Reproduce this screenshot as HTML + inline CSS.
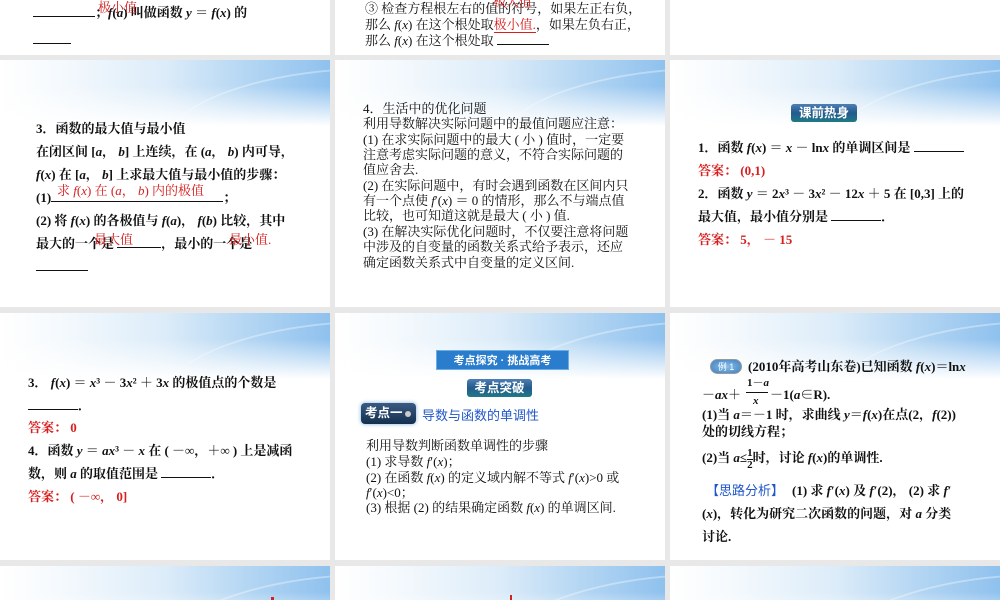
<!DOCTYPE html>
<html><head><meta charset="utf-8">
<style>
*{margin:0;padding:0;box-sizing:border-box}
html,body{width:1000px;height:600px;overflow:hidden;background:#e8e8e8}
body{position:relative;font-family:"Liberation Serif","Noto Serif CJK SC",serif;color:#111}
.s{position:absolute;background:#fff;overflow:hidden}
.hd{position:absolute;left:0;top:0;width:100%;height:66px;
background:linear-gradient(90deg,#ffffff 0%,#f4f9fd 20%,#dcecf9 50%,#b4d6f3 75%,#8fc1ee 100%);}
.hd:after{content:"";position:absolute;left:0;right:0;bottom:0;height:40px;background:linear-gradient(180deg,rgba(255,255,255,0),#fff)}
.sw{position:absolute;left:170px;top:12px;width:280px;height:90px;border-top:2px solid rgba(255,255,255,.35);border-radius:50%;transform:rotate(-8deg)}
.t{position:absolute;font-size:13px;line-height:15px;white-space:nowrap;font-weight:bold}
.r{color:#d62020}
i{font-style:italic}
.u{display:inline-block;border-bottom:1px solid #111;height:11px;vertical-align:baseline}
.b1{position:absolute;color:#fff;font-family:"Liberation Sans","Noto Sans CJK SC",sans-serif;font-weight:bold;text-align:center}
.fr{display:inline-block;vertical-align:middle;text-align:center;font-size:11px;line-height:11px}
.fr span{display:block}
.fr .n{border-bottom:1px solid #111}
</style></head><body>

<!-- Row 1 -->
<div class="s" style="left:0;top:0;width:330px;height:55px">
 <div class="t" style="left:33px;top:5px"><span class="u" style="width:62px"></span>；<i>f</i>(<i>a</i>) 叫做函数 <i>y</i> ＝ <i>f</i>(<i>x</i>) 的</div>
 <div class="t r" style="left:98px;top:0px;font-weight:normal">极小值</div>
 <div class="t" style="left:33px;top:32px"><span class="u" style="width:38px"></span></div>
</div>
<div class="s" style="left:335px;top:0;width:330px;height:55px">
 <div class="t" style="left:30px;top:1px;font-weight:normal">③ 检查方程根左右的值的符号，如果左正右负，</div>
 <div class="t r" style="left:158px;top:-6px;font-weight:normal">极大值</div>
 <div class="t" style="left:30px;top:17px;font-weight:normal">那么 <i>f</i>(<i>x</i>) 在这个根处取<span class="r" style="border-bottom:1px solid #d62020">极小值.</span>，如果左负右正，</div>
 <div class="t" style="left:30px;top:33px;font-weight:normal">那么 <i>f</i>(<i>x</i>) 在这个根处取 <span class="u" style="width:52px"></span></div>
</div>
<div class="s" style="left:670px;top:0;width:330px;height:55px"></div>

<!-- Row 2 -->
<div class="s" style="left:0;top:60px;width:330px;height:247px">
 <div class="hd"><div class="sw"></div></div>
 <div class="t" style="left:36px;top:61px">3．函数的最大值与最小值</div>
 <div class="t" style="left:36px;top:84px">在闭区间 [<i>a</i>， <i>b</i>] 上连续，在 (<i>a</i>， <i>b</i>) 内可导，</div>
 <div class="t" style="left:36px;top:107px"><i>f</i>(<i>x</i>) 在 [<i>a</i>， <i>b</i>] 上求最大值与最小值的步骤：</div>
 <div class="t" style="left:36px;top:130px">(1)<span class="u" style="width:172px"></span>；</div>
 <div class="t r" style="left:57px;top:123px;font-weight:normal">求 <i>f</i>(<i>x</i>) 在 (<i>a</i>， <i>b</i>) 内的极值</div>
 <div class="t" style="left:36px;top:153px">(2) 将 <i>f</i>(<i>x</i>) 的各极值与 <i>f</i>(<i>a</i>)， <i>f</i>(<i>b</i>) 比较，其中</div>
 <div class="t" style="left:36px;top:176px">最大的一个是 <span class="u" style="width:44px"></span>，最小的一个是</div>
 <div class="t r" style="left:94px;top:172px;font-weight:normal">最大值</div>
 <div class="t r" style="left:229px;top:172px;font-weight:normal">最小值.</div>
 <div class="t" style="left:36px;top:199px"><span class="u" style="width:52px"></span></div>
</div>
<div class="s" style="left:335px;top:60px;width:330px;height:247px">
 <div class="hd"><div class="sw"></div></div>
 <div class="t" style="left:28px;top:41px;font-weight:normal">4．生活中的优化问题</div>
 <div class="t" style="left:28px;top:56px;font-weight:normal">利用导数解决实际问题中的最值问题应注意：</div>
 <div class="t" style="left:28px;top:72px;font-weight:normal">(1) 在求实际问题中的最大 ( 小 ) 值时，一定要</div>
 <div class="t" style="left:28px;top:87px;font-weight:normal">注意考虑实际问题的意义，不符合实际问题的</div>
 <div class="t" style="left:28px;top:102px;font-weight:normal">值应舍去.</div>
 <div class="t" style="left:28px;top:118px;font-weight:normal">(2) 在实际问题中，有时会遇到函数在区间内只</div>
 <div class="t" style="left:28px;top:133px;font-weight:normal">有一个点使 <i>f</i>′(<i>x</i>) ＝ 0 的情形，那么不与端点值</div>
 <div class="t" style="left:28px;top:148px;font-weight:normal">比较，也可知道这就是最大 ( 小 ) 值.</div>
 <div class="t" style="left:28px;top:164px;font-weight:normal">(3) 在解决实际优化问题时，不仅要注意将问题</div>
 <div class="t" style="left:28px;top:179px;font-weight:normal">中涉及的自变量的函数关系式给予表示，还应</div>
 <div class="t" style="left:28px;top:195px;font-weight:normal">确定函数关系式中自变量的定义区间.</div>
</div>
<div class="s" style="left:670px;top:60px;width:330px;height:247px">
 <div class="hd"><div class="sw"></div></div>
 <div class="b1" style="left:121px;top:44px;width:66px;height:18px;border-radius:3px;font-size:12.5px;line-height:18px;background:linear-gradient(180deg,#4d7fb5,#245a8c 50%,#1f7a86)">课前热身</div>
 <div class="t" style="left:28px;top:80px">1．函数 <i>f</i>(<i>x</i>) ＝ <i>x</i> － ln<i>x</i> 的单调区间是 <span class="u" style="width:50px"></span></div>
 <div class="t r" style="left:28px;top:103px">答案： (0,1)</div>
 <div class="t" style="left:28px;top:126px">2．函数 <i>y</i> ＝ 2<i>x</i>³ － 3<i>x</i>² － 12<i>x</i> ＋ 5 在 [0,3] 上的</div>
 <div class="t" style="left:28px;top:149px">最大值，最小值分别是 <span class="u" style="width:50px"></span>．</div>
 <div class="t r" style="left:28px;top:172px">答案： 5， － 15</div>
</div>

<!-- Row 3 -->
<div class="s" style="left:0;top:313px;width:330px;height:247px">
 <div class="hd"><div class="sw"></div></div>
 <div class="t" style="left:28px;top:62px">3． <i>f</i>(<i>x</i>) ＝ <i>x</i>³ － 3<i>x</i>² ＋ 3<i>x</i> 的极值点的个数是</div>
 <div class="t" style="left:28px;top:85px"><span class="u" style="width:50px"></span>．</div>
 <div class="t r" style="left:28px;top:107px">答案： 0</div>
 <div class="t" style="left:28px;top:130px">4．函数 <i>y</i> ＝ <i>ax</i>³ － <i>x</i> 在 ( －∞，＋∞ ) 上是减函</div>
 <div class="t" style="left:28px;top:153px">数，则 <i>a</i> 的取值范围是 <span class="u" style="width:50px"></span>．</div>
 <div class="t r" style="left:28px;top:176px">答案： ( －∞， 0]</div>
</div>
<div class="s" style="left:335px;top:313px;width:330px;height:247px">
 <div class="hd"><div class="sw"></div></div>
 <div class="b1" style="left:101px;top:37px;width:133px;height:20px;font-size:11px;line-height:20px;background:#2a7ccc;border:1px solid #6aaee8">考点探究 · 挑战高考</div>
 <div class="b1" style="left:132px;top:66px;width:65px;height:18px;border-radius:3px;font-size:12.5px;line-height:18px;background:linear-gradient(180deg,#4d7fb5,#245a8c 50%,#1f7a86)">考点突破</div>
 <div class="b1" style="left:26px;top:90px;width:55px;height:21px;border-radius:4px;font-size:12.5px;line-height:21px;text-align:left;padding-left:4px;background:linear-gradient(180deg,#3a5a82,#13304f);box-shadow:0 0 4px #7fb0d8">考点一<span style="display:inline-block;width:6px;height:6px;border-radius:50%;background:#ccc;margin-left:2px"></span></div>
 <div class="t" style="left:87px;top:95px;color:#2057c8;font-weight:normal;font-family:'Liberation Sans','Noto Sans CJK SC',sans-serif">导数与函数的单调性</div>
 <div class="t" style="left:31px;top:125px;font-weight:normal">利用导数判断函数单调性的步骤</div>
 <div class="t" style="left:31px;top:141px;font-weight:normal">(1) 求导数 <i>f</i>′(<i>x</i>)；</div>
 <div class="t" style="left:31px;top:157px;font-weight:normal">(2) 在函数 <i>f</i>(<i>x</i>) 的定义域内解不等式 <i>f</i>′(<i>x</i>)&gt;0 或</div>
 <div class="t" style="left:31px;top:172px;font-weight:normal"><i>f</i>′(<i>x</i>)&lt;0；</div>
 <div class="t" style="left:31px;top:187px;font-weight:normal">(3) 根据 (2) 的结果确定函数 <i>f</i>(<i>x</i>) 的单调区间.</div>
</div>
<div class="s" style="left:670px;top:313px;width:330px;height:247px">
 <div class="hd"><div class="sw"></div></div>
 <div class="b1" style="left:40px;top:46px;width:32px;height:15px;border-radius:8px;font-size:9px;line-height:15px;background:radial-gradient(#8cc0ea,#3b7fc0);border:1px solid #999;font-weight:normal">例 1</div>
 <div class="t" style="left:78px;top:46px">(2010年高考山东卷)已知函数 <i>f</i>(<i>x</i>)＝ln<i>x</i></div>
 <div class="t" style="left:32px;top:74px">－<i>ax</i>＋</div>
 <div class="t" style="left:77px;top:63px;font-size:11px">1－<i>a</i></div>
 <div style="position:absolute;left:76px;top:79px;width:22px;border-top:1px solid #111"></div>
 <div class="t" style="left:83px;top:81px;font-size:11px"><i>x</i></div>
 <div class="t" style="left:100px;top:74px">－1(<i>a</i>∈R).</div>
 <div class="t" style="left:32px;top:94px">(1)当 <i>a</i>＝－1 时，求曲线 <i>y</i>＝<i>f</i>(<i>x</i>)在点(2，<i>f</i>(2))</div>
 <div class="t" style="left:32px;top:111px">处的切线方程；</div>
 <div class="t" style="left:32px;top:132px;line-height:26px">(2)当 <i>a</i>≤<span class="fr"><span class="n">1</span><span>2</span></span>时，讨论 <i>f</i>(<i>x</i>)的单调性.</div>
 <div class="t" style="left:36px;top:170px;color:#2057c8;font-weight:normal;font-family:'Liberation Sans','Noto Sans CJK SC',sans-serif">【思路分析】</div>
 <div class="t" style="left:122px;top:170px">(1) 求 <i>f</i>′(<i>x</i>) 及 <i>f</i>′(2)， (2) 求 <i>f</i>′</div>
 <div class="t" style="left:32px;top:193px">(<i>x</i>)，转化为研究二次函数的问题，对 <i>a</i> 分类</div>
 <div class="t" style="left:32px;top:216px">讨论.</div>
</div>

<!-- Row 4 -->
<div class="s" style="left:0;top:566px;width:330px;height:34px">
 <div class="hd"><div class="sw"></div></div>
 <div style="position:absolute;left:271px;top:31px;width:3px;height:3px;background:#d62020"></div>
</div>
<div class="s" style="left:335px;top:566px;width:330px;height:34px">
 <div class="hd"><div class="sw"></div></div>
 <div style="position:absolute;left:175px;top:29px;width:2px;height:5px;background:#d62020"></div>
</div>
<div class="s" style="left:670px;top:566px;width:330px;height:34px">
 <div class="hd"><div class="sw"></div></div>
</div>
</body></html>
